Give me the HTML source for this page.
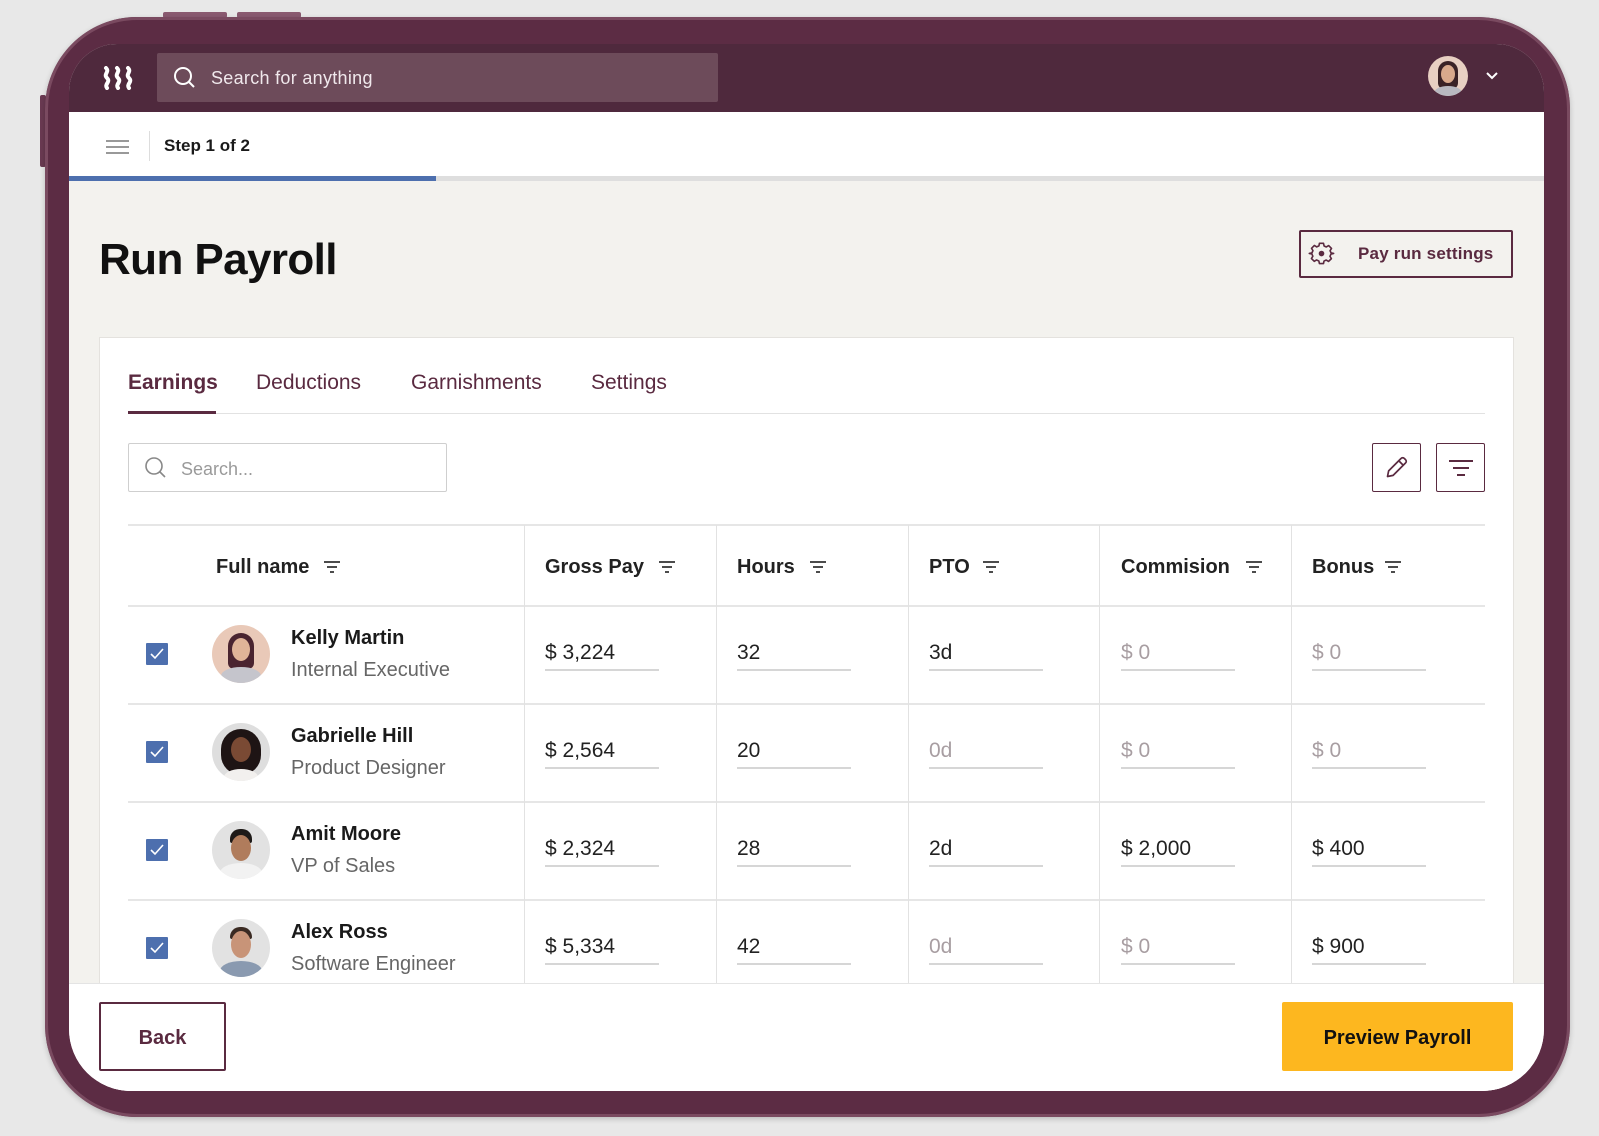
<!DOCTYPE html>
<html><head><meta charset="utf-8"><style>
*{box-sizing:border-box;margin:0;padding:0}
body{width:1599px;height:1136px;background:#e8e8e8;position:relative;overflow:hidden;font-family:"Liberation Sans",sans-serif;color:#1a1a1a}
.abs{position:absolute}
.dev{left:45px;top:17px;width:1525px;height:1100px;border-radius:92px;background:#5c2c44;box-shadow:inset 0 0 0 3px #7a4a60,0 2px 6px rgba(0,0,0,.2)}
.scr{left:69px;top:44px;width:1475px;height:1047px;border-radius:48px 48px 62px 62px;background:#f3f2ee;overflow:hidden}
.t{position:absolute;white-space:nowrap;margin-top:2px}
.hd{font-weight:bold;font-size:20px;color:#222}
.val{font-size:21px;color:#222}
.ph{color:#a89ea2}
.ul{position:absolute;height:2px;background:#d6d6d6;width:114px}
.cb{position:absolute;width:22px;height:22px;background:#4d6fae;border-radius:1px}
.av{position:absolute;width:58px;height:58px;border-radius:50%}
.vl{position:absolute;width:1px;background:#e2e2e2}
.hl{position:absolute;height:2px;background:#e6e6e6}
</style></head><body>
<div class="abs" style="left:163px;top:12px;width:64px;height:6px;background:#8a5a70;border-radius:2px"></div>
<div class="abs" style="left:237px;top:12px;width:64px;height:6px;background:#8a5a70;border-radius:2px"></div>
<div class="abs" style="left:40px;top:95px;width:6px;height:72px;background:#6a3a52;border-radius:2px"></div>
<div class="abs dev"></div>
<div class="abs scr">
 <!-- nav -->
 <div class="abs" style="left:0;top:0;width:1475px;height:68px;background:#4f293d"></div>
 <svg class="abs" style="left:33px;top:22px" width="34" height="24" viewBox="0 0 34 24"><g fill="none" stroke="#fff" stroke-width="4" stroke-linecap="round"><path d="M4 2c4 4-3 6 1 10s-3 6 0 10"/><path d="M15 2c4 4-3 6 1 10s-3 6 0 10"/><path d="M26 2c4 4-3 6 1 10s-3 6 0 10"/></g></svg>
 <div class="abs" style="left:88px;top:9px;width:561px;height:49px;background:#6d4b5a;border-radius:2px"></div>
 <svg class="abs" style="left:104px;top:22px" width="24" height="24" viewBox="0 0 24 24"><circle cx="10" cy="10" r="8" fill="none" stroke="#fff" stroke-width="2"/><path d="M16 16l5 5" stroke="#fff" stroke-width="2"/></svg>
 <div class="t" style="left:142px;top:22px;font-size:18px;color:#f0e8ec;letter-spacing:.3px">Search for anything</div>
 <div class="abs" style="left:1359px;top:12px;width:40px;height:40px;border-radius:50%;background:#e8cfc2;overflow:hidden"><div class="abs" style="left:10px;top:5px;width:20px;height:28px;border-radius:10px 10px 6px 6px;background:#3a2226"></div><div class="abs" style="left:13px;top:9px;width:14px;height:18px;border-radius:50%;background:#d9a98c"></div><div class="abs" style="left:6px;top:30px;width:28px;height:14px;border-radius:50%;background:#b8b8c0"></div></div>
 <svg class="abs" style="left:1416px;top:27px" width="14" height="10" viewBox="0 0 14 10"><path d="M2 2l5 5 5-5" fill="none" stroke="#fff" stroke-width="2"/></svg>
 <!-- step bar -->
 <div class="abs" style="left:0;top:68px;width:1475px;height:64px;background:#fff"></div>
 <div class="abs" style="left:37px;top:96px;width:23px;height:2px;background:#999"></div>
 <div class="abs" style="left:37px;top:102px;width:23px;height:2px;background:#999"></div>
 <div class="abs" style="left:37px;top:108px;width:23px;height:2px;background:#999"></div>
 <div class="abs" style="left:80px;top:87px;width:1px;height:30px;background:#ddd"></div>
 <div class="t" style="left:95px;top:90px;font-size:17px;font-weight:bold">Step 1 of 2</div>
 <div class="abs" style="left:0;top:132px;width:1475px;height:5px;background:#dedede"></div>
 <div class="abs" style="left:0;top:132px;width:367px;height:5px;background:#4d6fae"></div>
 <!-- title -->
 <div class="t" style="left:30px;top:189px;font-size:44px;font-weight:bold;color:#111;letter-spacing:-0.6px">Run Payroll</div>
 <div class="abs" style="left:1230px;top:186px;width:214px;height:48px;border:2px solid #5a2a40;border-radius:2px"></div>
 <svg class="abs" style="left:1239px;top:196px" width="27" height="27" viewBox="0 0 24 24"><circle cx="12" cy="12" r="2.5" fill="#5a2a40"/><path d="M10 2h4l.6 2.6 2.2 1 2.3-1.4 2.8 2.8-1.4 2.3 1 2.2L24 12v0l-2.6.6-1 2.2 1.4 2.3-2.8 2.8-2.3-1.4-2.2 1L14 22h-4l-.6-2.6-2.2-1-2.3 1.4-2.8-2.8 1.4-2.3-1-2.2L0 12l2.6-.6 1-2.2L2.2 6.9 5 4.1l2.3 1.4 2.2-1z" transform="scale(.9) translate(1.3 1.3)" fill="none" stroke="#5a2a40" stroke-width="1.6" stroke-linejoin="round"/></svg>
 <div class="t" style="left:1289px;top:198px;font-size:17px;font-weight:bold;color:#5a2a40;letter-spacing:.2px">Pay run settings</div>
 <!-- card -->
 <div class="abs" style="left:30px;top:293px;width:1415px;height:760px;background:#fff;border:1px solid #e4e2de"></div>
 <div class="t" style="left:59px;top:325px;font-size:21px;color:#5a2a40;font-weight:bold">Earnings</div>
 <div class="t" style="left:187px;top:325px;font-size:21px;color:#5a2a40">Deductions</div>
 <div class="t" style="left:342px;top:325px;font-size:21px;color:#5a2a40">Garnishments</div>
 <div class="t" style="left:522px;top:325px;font-size:21px;color:#5a2a40">Settings</div>
 <div class="abs" style="left:59px;top:369px;width:1357px;height:1px;background:#e2e2e2"></div>
 <div class="abs" style="left:59px;top:367px;width:88px;height:3px;background:#5a2a40"></div>
 <div class="abs" style="left:59px;top:399px;width:319px;height:49px;border:1.5px solid #cfcfcf;border-radius:2px"></div>
 <svg class="abs" style="left:75px;top:412px" width="24" height="24" viewBox="0 0 24 24"><circle cx="10" cy="10" r="8" fill="none" stroke="#888" stroke-width="1.6"/><path d="M16 16l5 5" stroke="#888" stroke-width="1.6"/></svg>
 <div class="t" style="left:112px;top:413px;font-size:18px;color:#9a9a9a">Search...</div>
 <div class="abs" style="left:1303px;top:399px;width:49px;height:49px;border:1.5px solid #5a2a40;border-radius:2px"></div>
 <svg class="abs" style="left:1314px;top:410px" width="27" height="27" viewBox="0 0 24 24"><path d="M4 20l1-5L16 4a2 2 0 013 0l1 1a2 2 0 010 3L9 19z M14 6l4 4" fill="none" stroke="#5a2a40" stroke-width="1.5" stroke-linejoin="round"/></svg>
 <div class="abs" style="left:1367px;top:399px;width:49px;height:49px;border:1.5px solid #5a2a40;border-radius:2px"></div>
 <div class="abs" style="left:1380px;top:416px;width:24px;height:2px;background:#5a2a40"></div>
 <div class="abs" style="left:1384px;top:423px;width:16px;height:2px;background:#5a2a40"></div>
 <div class="abs" style="left:1388px;top:430px;width:8px;height:2px;background:#5a2a40"></div>
 <!-- table lines -->
 <div class="hl" style="left:59px;top:480px;width:1357px"></div>
 <div class="hl" style="left:59px;top:561px;width:1357px"></div>
 <div class="hl" style="left:59px;top:659px;width:1357px"></div>
 <div class="hl" style="left:59px;top:757px;width:1357px"></div>
 <div class="hl" style="left:59px;top:855px;width:1357px"></div>
 <div class="vl" style="left:455px;top:481px;height:460px"></div>
 <div class="vl" style="left:647px;top:481px;height:460px"></div>
 <div class="vl" style="left:839px;top:481px;height:460px"></div>
 <div class="vl" style="left:1030px;top:481px;height:460px"></div>
 <div class="vl" style="left:1222px;top:481px;height:460px"></div>
 <!-- headers -->
 <div class="t hd" style="left:147px;top:510px">Full name</div>
 <div class="t hd" style="left:476px;top:510px">Gross Pay</div>
 <div class="t hd" style="left:668px;top:510px">Hours</div>
 <div class="t hd" style="left:860px;top:510px">PTO</div>
 <div class="t hd" style="left:1052px;top:510px">Commision</div>
 <div class="t hd" style="left:1243px;top:510px">Bonus</div>
 <svg class="abs" style="left:254px;top:516px" width="18" height="14"><path d="M1 2h16M4 7h10M7 12h4" stroke="#333" stroke-width="1.8"/></svg>
 <svg class="abs" style="left:589px;top:516px" width="18" height="14"><path d="M1 2h16M4 7h10M7 12h4" stroke="#333" stroke-width="1.8"/></svg>
 <svg class="abs" style="left:740px;top:516px" width="18" height="14"><path d="M1 2h16M4 7h10M7 12h4" stroke="#333" stroke-width="1.8"/></svg>
 <svg class="abs" style="left:913px;top:516px" width="18" height="14"><path d="M1 2h16M4 7h10M7 12h4" stroke="#333" stroke-width="1.8"/></svg>
 <svg class="abs" style="left:1176px;top:516px" width="18" height="14"><path d="M1 2h16M4 7h10M7 12h4" stroke="#333" stroke-width="1.8"/></svg>
 <svg class="abs" style="left:1315px;top:516px" width="18" height="14"><path d="M1 2h16M4 7h10M7 12h4" stroke="#333" stroke-width="1.8"/></svg>

 <!-- row 1 -->
 <div class="cb" style="left:77px;top:599px"><svg width="22" height="22"><path d="M5 11l4 4 8-9" fill="none" stroke="#fff" stroke-width="1.6"/></svg></div>
 <div class="av" style="left:143px;top:581px;background:#e9c9b8;overflow:hidden"><div class="abs" style="left:16px;top:8px;width:26px;height:36px;border-radius:13px 13px 6px 6px;background:#4a2430"></div><div class="abs" style="left:20px;top:13px;width:18px;height:23px;border-radius:50%;background:#e0b498"></div><div class="abs" style="left:9px;top:42px;width:40px;height:18px;border-radius:50%;background:#c5c5cc"></div></div>
 <div class="t" style="left:222px;top:581px;font-size:20px;font-weight:bold">Kelly Martin</div>
 <div class="t" style="left:222px;top:613px;font-size:20px;color:#666">Internal Executive</div>
 <!-- row 2 -->
 <div class="cb" style="left:77px;top:697px"><svg width="22" height="22"><path d="M5 11l4 4 8-9" fill="none" stroke="#fff" stroke-width="1.6"/></svg></div>
 <div class="av" style="left:143px;top:679px;background:#dedede;overflow:hidden"><div class="abs" style="left:9px;top:6px;width:40px;height:46px;border-radius:20px;background:#1e1414"></div><div class="abs" style="left:19px;top:14px;width:20px;height:25px;border-radius:50%;background:#7a4a34"></div><div class="abs" style="left:12px;top:46px;width:34px;height:16px;border-radius:50%;background:#f2f0ee"></div></div>
 <div class="t" style="left:222px;top:679px;font-size:20px;font-weight:bold">Gabrielle Hill</div>
 <div class="t" style="left:222px;top:711px;font-size:20px;color:#666">Product Designer</div>
 <!-- row 3 -->
 <div class="cb" style="left:77px;top:795px"><svg width="22" height="22"><path d="M5 11l4 4 8-9" fill="none" stroke="#fff" stroke-width="1.6"/></svg></div>
 <div class="av" style="left:143px;top:777px;background:#e2e2e2;overflow:hidden"><div class="abs" style="left:18px;top:8px;width:22px;height:14px;border-radius:10px 10px 2px 2px;background:#1e1a18"></div><div class="abs" style="left:19px;top:14px;width:20px;height:26px;border-radius:50%;background:#b07c5c"></div><div class="abs" style="left:8px;top:42px;width:42px;height:20px;border-radius:50%;background:#f2f2f2"></div></div>
 <div class="t" style="left:222px;top:777px;font-size:20px;font-weight:bold">Amit Moore</div>
 <div class="t" style="left:222px;top:809px;font-size:20px;color:#666">VP of Sales</div>
 <!-- row 4 -->
 <div class="cb" style="left:77px;top:893px"><svg width="22" height="22"><path d="M5 11l4 4 8-9" fill="none" stroke="#fff" stroke-width="1.6"/></svg></div>
 <div class="av" style="left:143px;top:875px;background:#e2e2e2;overflow:hidden"><div class="abs" style="left:18px;top:8px;width:22px;height:12px;border-radius:10px 10px 2px 2px;background:#3a2a22"></div><div class="abs" style="left:19px;top:12px;width:20px;height:27px;border-radius:50%;background:#c89478"></div><div class="abs" style="left:8px;top:42px;width:42px;height:20px;border-radius:50%;background:#8a9ab0"></div></div>
 <div class="t" style="left:222px;top:875px;font-size:20px;font-weight:bold">Alex Ross</div>
 <div class="t" style="left:222px;top:907px;font-size:20px;color:#666">Software Engineer</div>

 <!-- values -->
 <div class="t val" style="left:476px;top:595px">$ 3,224</div><div class="ul" style="left:476px;top:625px"></div>
 <div class="t val" style="left:668px;top:595px">32</div><div class="ul" style="left:668px;top:625px"></div>
 <div class="t val" style="left:860px;top:595px">3d</div><div class="ul" style="left:860px;top:625px"></div>
 <div class="t val ph" style="left:1052px;top:595px">$ 0</div><div class="ul" style="left:1052px;top:625px"></div>
 <div class="t val ph" style="left:1243px;top:595px">$ 0</div><div class="ul" style="left:1243px;top:625px"></div>

 <div class="t val" style="left:476px;top:693px">$ 2,564</div><div class="ul" style="left:476px;top:723px"></div>
 <div class="t val" style="left:668px;top:693px">20</div><div class="ul" style="left:668px;top:723px"></div>
 <div class="t val ph" style="left:860px;top:693px">0d</div><div class="ul" style="left:860px;top:723px"></div>
 <div class="t val ph" style="left:1052px;top:693px">$ 0</div><div class="ul" style="left:1052px;top:723px"></div>
 <div class="t val ph" style="left:1243px;top:693px">$ 0</div><div class="ul" style="left:1243px;top:723px"></div>

 <div class="t val" style="left:476px;top:791px">$ 2,324</div><div class="ul" style="left:476px;top:821px"></div>
 <div class="t val" style="left:668px;top:791px">28</div><div class="ul" style="left:668px;top:821px"></div>
 <div class="t val" style="left:860px;top:791px">2d</div><div class="ul" style="left:860px;top:821px"></div>
 <div class="t val" style="left:1052px;top:791px">$ 2,000</div><div class="ul" style="left:1052px;top:821px"></div>
 <div class="t val" style="left:1243px;top:791px">$ 400</div><div class="ul" style="left:1243px;top:821px"></div>

 <div class="t val" style="left:476px;top:889px">$ 5,334</div><div class="ul" style="left:476px;top:919px"></div>
 <div class="t val" style="left:668px;top:889px">42</div><div class="ul" style="left:668px;top:919px"></div>
 <div class="t val ph" style="left:860px;top:889px">0d</div><div class="ul" style="left:860px;top:919px"></div>
 <div class="t val ph" style="left:1052px;top:889px">$ 0</div><div class="ul" style="left:1052px;top:919px"></div>
 <div class="t val" style="left:1243px;top:889px">$ 900</div><div class="ul" style="left:1243px;top:919px"></div>

 <!-- footer -->
 <div class="abs" style="left:0;top:939px;width:1475px;height:110px;background:#fff;border-top:1px solid #e4e4e4"></div>
 <div class="abs" style="left:30px;top:958px;width:127px;height:69px;border:2px solid #5a2a40;border-radius:2px"></div>
 <div class="t" style="left:30px;top:981px;width:127px;text-align:center;font-size:20px;font-weight:bold;color:#5a2a40">Back</div>
 <div class="abs" style="left:1213px;top:958px;width:231px;height:69px;background:#fdb71f;border-radius:2px"></div>
 <div class="t" style="left:1213px;top:981px;width:231px;text-align:center;font-size:20px;font-weight:bold;color:#111">Preview Payroll</div>
</div>
</body></html>
